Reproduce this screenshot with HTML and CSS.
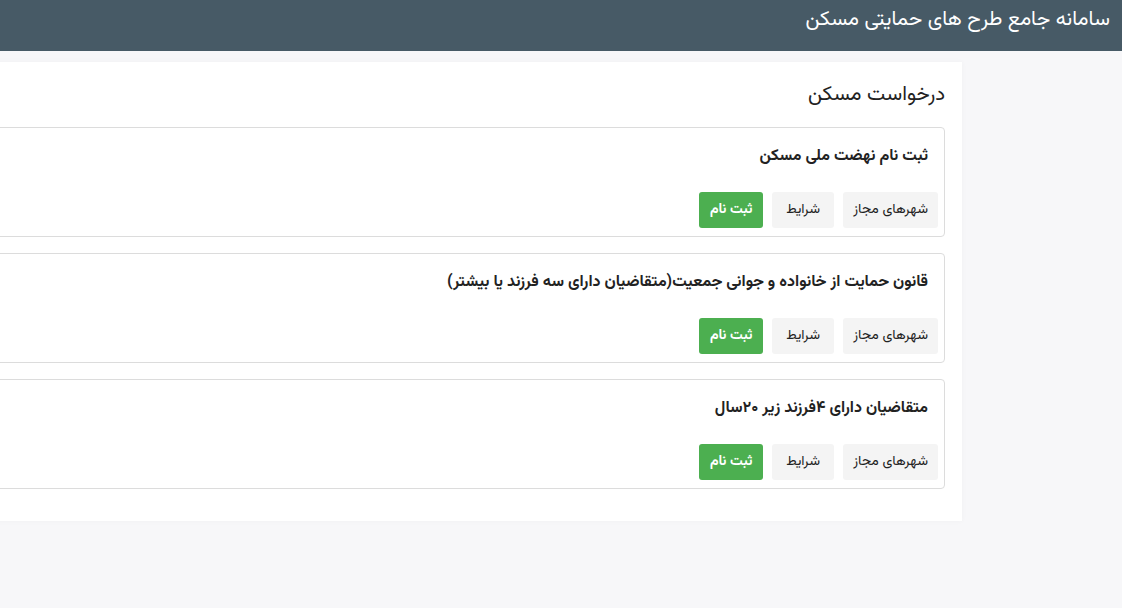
FILE: index.html
```html
<!DOCTYPE html>
<html lang="fa" dir="rtl">

<head>
    <meta charset="UTF-8">
    <meta name="viewport" content="width=device-width, initial-scale=1.0">
    <title>سامانه جامع طرح های حمایتی مسکن</title>
    <link rel="stylesheet" href="styles.css">
</head>

<body>
    <div class="header">
        <div class="header-title">سامانه جامع طرح های حمایتی مسکن</div>
    </div>
    <div class="main">
        <div class="panel">
            <div class="panel-title">درخواست مسکن</div>

            <div class="plan-card">
                <div class="plan-title">ثبت نام نهضت ملی مسکن</div>
                <div class="plan-actions">
                    <a href="#" class="btn">شهرهای مجاز</a>
                    <a href="#" class="btn">شرایط</a>
                    <a href="#" class="btn btn-green">ثبت نام</a>
                </div>
            </div>

            <div class="plan-card">
                <div class="plan-title">قانون حمایت از خانواده و جوانی جمعیت(متقاضیان دارای سه فرزند یا بیشتر)</div>
                <div class="plan-actions">
                    <a href="#" class="btn">شهرهای مجاز</a>
                    <a href="#" class="btn">شرایط</a>
                    <a href="#" class="btn btn-green">ثبت نام</a>
                </div>
            </div>

            <div class="plan-card">
                <div class="plan-title">متقاضیان دارای ۴فرزند زیر ۲۰سال</div>
                <div class="plan-actions">
                    <a href="#" class="btn">شهرهای مجاز</a>
                    <a href="#" class="btn">شرایط</a>
                    <a href="#" class="btn btn-green">ثبت نام</a>
                </div>
            </div>
        </div>
    </div>
</body>

</html>
```

FILE: styles.css
```css
body {
    font-family: "Vazirmatn", "Noto Sans Arabic", "DejaVu Sans", sans-serif;
    background-color: #f7f7f9;
    margin: 0;
    padding: 0;
    min-height: 100vh;
    overflow: hidden;
}

.header {
    height: 51px;
    background-color: #475a66;
    color: #ffffff;
    padding: 0 12px;
    box-sizing: border-box;
}

.header-title {
    font-size: 20.5px;
    line-height: 40px;
}

.main {
    display: flex;
    padding-top: 11px;
    margin-right: 160px;
    margin-left: -60px;
}

.panel {
    flex: 1;
    background: #ffffff;
    padding: 16px 17px 16px;
    box-shadow: 0 0 6px rgba(0, 0, 0, 0.03);
}

.panel-title {
    font-size: 20.5px;
    color: #222;
    line-height: 32px;
    margin: 1px 0 16px;
}

.plan-card {
    border: 1px solid #dcdcdc;
    border-radius: 4px;
    padding: 16px 16px 8px 8px;
    margin-bottom: 16px;
    height: 110px;
    box-sizing: border-box;
    display: flex;
    flex-direction: column;
    justify-content: space-between;
}

.plan-title {
    font-size: 16px;
    font-weight: bold;
    color: #222;
    line-height: 26px;
}

.plan-actions {
    display: flex;
    gap: 9px;
    margin-right: -10px;
}

.btn {
    display: block;
    min-width: 62px;
    box-sizing: border-box;
    text-align: center;
    background-color: #f4f4f4;
    color: #222;
    text-decoration: none;
    font-size: 14px;
    line-height: 36px;
    height: 36px;
    padding: 0 10px;
    border-radius: 3px;
}

.btn-green {
    min-width: 64px;
    background-color: #4caf50;
    color: #ffffff;
    font-weight: bold;
}
```
